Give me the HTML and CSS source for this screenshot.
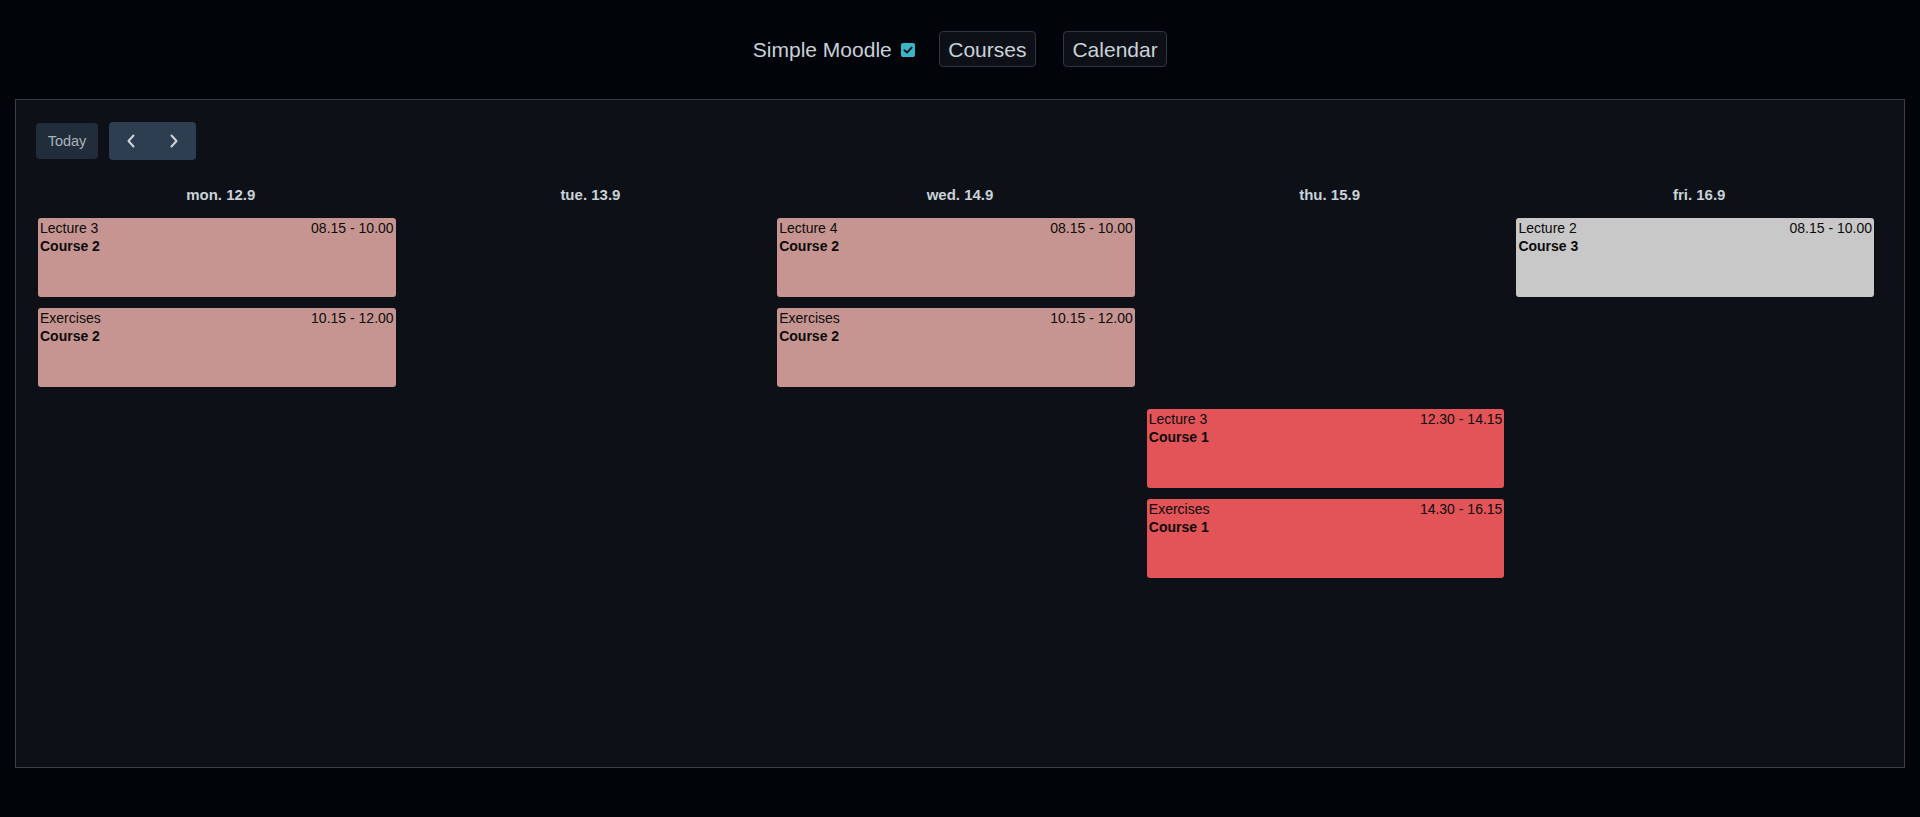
FILE: index.html
```html
<!DOCTYPE html>
<html lang="en">
<head>
<meta charset="utf-8">
<title>Simple Moodle – Calendar</title>
<link rel="stylesheet" href="styles.css">
</head>
<body>
<header class="topbar">
  <div class="brand">
    <span class="brand-name">Simple Moodle</span>
    <span class="brand-check">
      <svg width="10" height="10" viewBox="0 0 10 10"><path d="M1.5 5.2 L4 7.6 L8.6 2.6" fill="none" stroke="#0d1117" stroke-width="1.9" stroke-linecap="round" stroke-linejoin="round"/></svg>
    </span>
  </div>
  <a class="nav-link nav-courses">Courses</a>
  <a class="nav-link nav-calendar">Calendar</a>
</header>

<main class="panel">
  <div class="toolbar">
    <button class="btn-today">Today</button>
    <div class="btn-group">
      <button class="btn-nav" aria-label="Previous">
        <svg width="10" height="14" viewBox="0 0 10 14"><path d="M7.5 1.5 L2.5 7 L7.5 12.5" fill="none" stroke="#d0d6dc" stroke-width="2" stroke-linecap="round" stroke-linejoin="round"/></svg>
      </button>
      <button class="btn-nav" aria-label="Next">
        <svg width="10" height="14" viewBox="0 0 10 14"><path d="M2.5 1.5 L7.5 7 L2.5 12.5" fill="none" stroke="#d0d6dc" stroke-width="2" stroke-linecap="round" stroke-linejoin="round"/></svg>
      </button>
    </div>
  </div>

  <div class="week">
    <div class="day-head" style="grid-column:1">mon. 12.9</div>
    <div class="day-head" style="grid-column:2">tue. 13.9</div>
    <div class="day-head" style="grid-column:3">wed. 14.9</div>
    <div class="day-head" style="grid-column:4">thu. 15.9</div>
    <div class="day-head" style="grid-column:5">fri. 16.9</div>

    <div class="event course-2" style="grid-column:1; grid-row:3 / span 7">
      <div class="event-top"><span>Lecture 3</span><span>08.15 - 10.00</span></div>
      <div class="event-course">Course 2</div>
    </div>
    <div class="event course-2" style="grid-column:1; grid-row:11 / span 7">
      <div class="event-top"><span>Exercises</span><span>10.15 - 12.00</span></div>
      <div class="event-course">Course 2</div>
    </div>

    <div class="event course-2" style="grid-column:3; grid-row:3 / span 7">
      <div class="event-top"><span>Lecture 4</span><span>08.15 - 10.00</span></div>
      <div class="event-course">Course 2</div>
    </div>
    <div class="event course-2" style="grid-column:3; grid-row:11 / span 7">
      <div class="event-top"><span>Exercises</span><span>10.15 - 12.00</span></div>
      <div class="event-course">Course 2</div>
    </div>

    <div class="event course-1" style="grid-column:4; grid-row:20 / span 7">
      <div class="event-top"><span>Lecture 3</span><span>12.30 - 14.15</span></div>
      <div class="event-course">Course 1</div>
    </div>
    <div class="event course-1" style="grid-column:4; grid-row:28 / span 7">
      <div class="event-top"><span>Exercises</span><span>14.30 - 16.15</span></div>
      <div class="event-course">Course 1</div>
    </div>

    <div class="event course-3" style="grid-column:5; grid-row:3 / span 7">
      <div class="event-top"><span>Lecture 2</span><span>08.15 - 10.00</span></div>
      <div class="event-course">Course 3</div>
    </div>
  </div>
</main>
</body>
</html>
```

FILE: styles.css
```css
* { box-sizing: border-box; }

html, body {
  margin: 0;
  padding: 0;
  background: #010409;
  color: #c9d1d9;
  font-family: "Liberation Sans", Arial, sans-serif;
}

.topbar {
  display: flex;
  justify-content: center;
  align-items: center;
  padding-top: 31px;
  height: 67px;
}

.brand {
  display: flex;
  align-items: center;
  font-size: 21px;
  color: #c9d1d9;
}

.brand-name { padding-top: 2px; }

.brand-check {
  display: inline-flex;
  align-items: center;
  justify-content: center;
  width: 14px;
  height: 14px;
  margin-left: 9px;
  margin-top: 1px;
  background: #3ab5c6;
  border-radius: 2px;
}

.nav-link {
  display: inline-flex;
  align-items: center;
  height: 36px;
  padding: 2px 8.5px 0;
  font-size: 21px;
  color: #c9d1d9;
  background: #0d1117;
  border: 1px solid #30363d;
  border-radius: 4px;
  cursor: pointer;
}

.nav-courses { margin-left: 24px; }
.nav-calendar { margin-left: 27px; }

.panel {
  margin: 32px 15px 0;
  height: 669px;
  background: #0d1117;
  border: 1px solid #3b3f45;
  padding: 22px 20px;
}

.toolbar {
  display: flex;
  align-items: center;
  gap: 11px;
}

.btn-today {
  height: 36px;
  width: 62px;
  padding: 0;
  border: none;
  border-radius: 4px;
  background: #222d3b;
  color: #a9b2bc;
  font-family: "Liberation Sans", Arial, sans-serif;
  font-size: 14.5px;
}

.btn-group {
  display: flex;
  height: 38px;
  width: 87px;
  border-radius: 4px;
  background: #2c3e50;
  overflow: hidden;
}

.btn-nav {
  flex: 1;
  display: flex;
  align-items: center;
  justify-content: center;
  padding: 0;
  border: none;
  background: transparent;
}

.week {
  display: grid;
  grid-template-columns: repeat(5, 1fr);
  grid-template-rows: 24px 11px repeat(40, 11.25px);
  margin-top: 23px;
}

.day-head {
  grid-row: 1;
  text-align: center;
  font-size: 15px;
  font-weight: bold;
  line-height: 24px;
  color: #c9d1d9;
}

.event {
  margin: 0 10px 0 2px;
  padding: 1px 2px 0;
  border-radius: 3px;
  font-size: 14px;
  line-height: 18px;
  color: #0b0b0b;
  overflow: hidden;
}

.event-top {
  display: flex;
  justify-content: space-between;
}

.event-course { font-weight: bold; }

.course-1 { background: #e25457; }
.course-2 { background: #c79591; }
.course-3 { background: #c8c8c8; }
```
